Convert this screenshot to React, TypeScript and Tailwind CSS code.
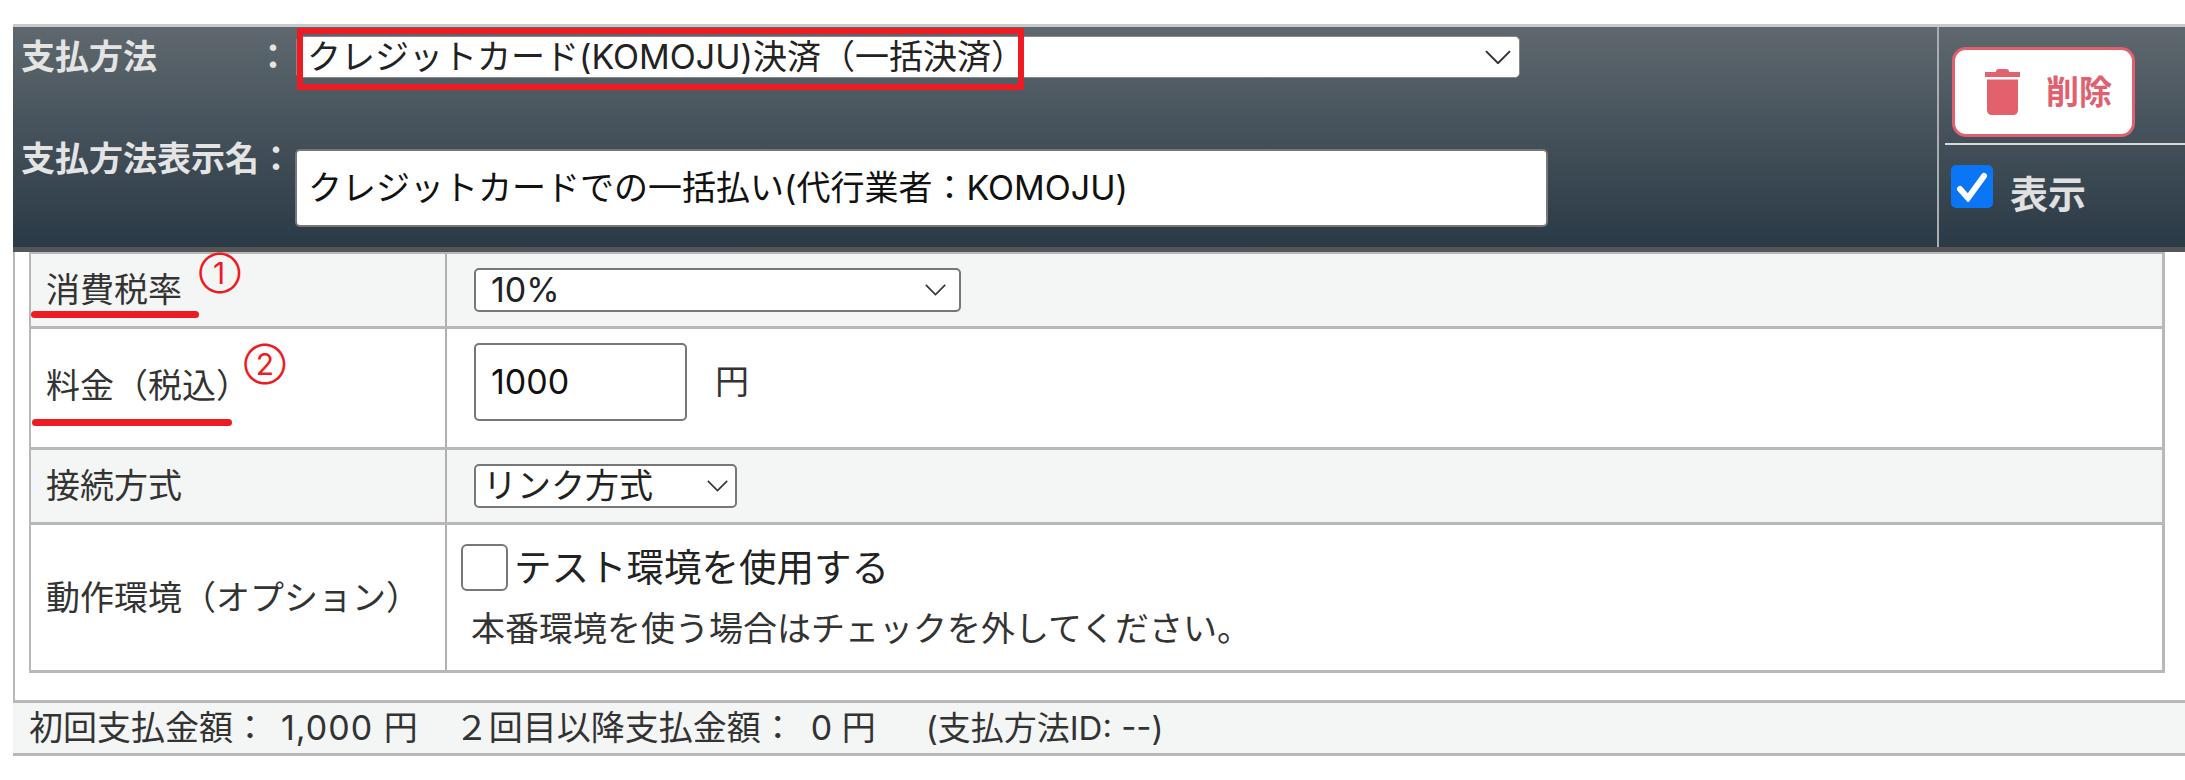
import { useState } from "react";

const jp = "font-['Inter','Noto_Sans_CJK_JP',sans-serif]";

const Chevron = ({ w }: { w: number }) => (
    <svg width={w} height={w * 0.55} viewBox="0 0 26 14" fill="none" stroke="#333" strokeWidth="2" className="shrink-0">
        <path d="M1 1l12 12L25 1" />
    </svg>
);

const Pick = ({ label, w, className }: { label: string; w: number; className: string }) => (
    <div className={`flex items-center justify-between bg-white rounded-[5px] text-[#222] ${className}`}>
        <span className="whitespace-nowrap">{label}</span>
        <Chevron w={w} />
    </div>
);

const Row = ({ shade, height, label, children }: { shade?: boolean; height: string; label: React.ReactNode; children: React.ReactNode }) => (
    <div className={`flex border-b-[3px] border-[#b8b8b8] ${shade ? "bg-[#f4f6f5]" : "bg-white"} ${height}`}>
        <div className="w-[416px] shrink-0 flex items-center pl-[15px] border-r-2 border-[#b0b0b0] text-[#333]">{label}</div>
        <div className="flex-1 flex items-center pl-[27px]">{children}</div>
    </div>
);

const App = () => {
    const [visible, setVisible] = useState(true);
    const [test, setTest] = useState(false);

    return (
        <div className={`${jp} w-[2185px] h-[780px] overflow-hidden bg-white pt-[24px] pl-[13px] text-[34px] leading-none`}>
            <header className="flex h-[228px] border-t-[3px] border-[#c9c9c9] border-b-[5px] border-b-[#555] bg-gradient-to-b from-[#5f686e] to-[#2a3a46]">
                <div className="w-[1926px] shrink-0 border-r-2 border-[#a9adb0] pl-[8px] pt-[9px]">
                    <div className="flex items-start">
                        <div className="w-[275px] flex justify-between pt-[4px] pr-[6px] font-bold text-[#e4e4e4]">
                            <span>支払方法</span>
                            <span>：</span>
                        </div>
                        <div className="relative">
                            <Pick label="クレジットカード(KOMOJU)決済（一括決済）" w={26} className="w-[1224px] h-[42px] pl-[10px] pr-[8px] border border-[#888]" />
                            <div className="absolute left-[1px] top-[-8px] w-[727px] h-[62px] border-[6px] border-[#ed1c24]" />
                        </div>
                    </div>
                    <div className="flex items-start mt-[71px]">
                        <div className="w-[274px] mt-[-7px] font-bold text-[#e4e4e4] whitespace-nowrap">支払方法表示名：</div>
                        <div className="w-[1253px] h-[78px] flex items-center pl-[11px] bg-white rounded-[5px] border-2 border-[#777] text-[#111] whitespace-nowrap">
                            クレジットカードでの一括払い(代行業者：KOMOJU)
                        </div>
                    </div>
                </div>
                <div className="flex-1 pt-[20px]">
                    <button className="ml-[13px] w-[183px] h-[90px] flex items-center justify-center gap-[26px] pl-[10px] bg-white rounded-[14px] border-[3px] border-[#e0606e] text-[#e0606e] text-[33px] font-bold">
                        <svg width="35" height="46" viewBox="0 0 35 46" fill="#e3616d">
                            <path d="M11 2.5C11 1 12 0 14 0h7c2 0 3 1 3 2.5V3h11v5H0V3h11z" />
                            <path d="M2 10.5h31V41c0 3-2 5-5 5H7c-3 0-5-2-5-5z" />
                        </svg>
                        削除
                    </button>
                    <div className="ml-[6px] mt-[6px] h-[2px] bg-[#d8d8d8]" />
                    <label className="ml-[12px] mt-[20px] flex items-start gap-[17px] font-bold text-[#e0e0e0]">
                        <input type="checkbox" checked={visible} onChange={() => setVisible(!visible)} className="sr-only" />
                        <span className="w-[42px] h-[43px] rounded-[5px] bg-[#0a76f6] flex items-center justify-center">
                            <svg width="32" height="30" viewBox="0 0 32 30" fill="none" stroke="white" strokeWidth="6" strokeLinecap="round">
                                <path d="M4 17l8 9L28 4" />
                            </svg>
                        </span>
                        <span className="mt-[10px] text-[38px]">表示</span>
                    </label>
                </div>
            </header>

            <div className="h-[448px] border-l-2 border-[#b8b8b8] pl-[14px] pr-[20px]">
                <div className="border-t-2 border-l-2 border-r-[3px] border-[#b8b8b8]">
                    <Row shade height="h-[75px]" label={
                        <span className="relative">
                            消費税率
                            <span className="absolute left-[-15px] top-[38px] w-[168px] h-[7px] rounded-full bg-[#ed1c24]" />
                            <span className="absolute left-[153px] top-[-15px] text-[30px] text-[#ed1c24]">①</span>
                        </span>
                    }>
                        <Pick label="10%" w={21} className="w-[487px] h-[44px] pl-[15px] pr-[13px] border-2 border-[#777]" />
                    </Row>
                    <Row height="h-[121px]" label={
                        <span className="relative top-[-2px]">
                            料金（税込）
                            <span className="absolute left-[-14px] top-[50px] w-[200px] h-[7px] rounded-full bg-[#ed1c24]" />
                            <span className="absolute left-[198px] top-[-20px] text-[30px] text-[#ed1c24]">②</span>
                        </span>
                    }>
                        <div className="w-[213px] h-[78px] flex items-center pl-[15px] rounded-[5px] border-2 border-[#777] text-[#111] mt-[-12px]">1000</div>
                        <span className="ml-[28px] text-[#333] mt-[-12px]">円</span>
                    </Row>
                    <Row shade height="h-[75px]" label="接続方式">
                        <Pick label="リンク方式" w={21} className="w-[263px] h-[44px] pl-[7px] pr-[7px] border-2 border-[#777]" />
                    </Row>
                    <Row height="h-[148px]" label="動作環境（オプション）">
                        <div className="self-start ml-[-13px]">
                            <label className="flex items-center mt-[19px]">
                                <input type="checkbox" checked={test} onChange={() => setTest(!test)} className="sr-only" />
                                <span className="w-[47px] h-[47px] rounded-[6px] border-2 border-[#777] bg-white" />
                                <span className="ml-[6px] text-[#222] text-[37.5px]">テスト環境を使用する</span>
                            </label>
                            <p className="mt-[21px] ml-[10px] text-[#333] text-[34px]">本番環境を使う場合はチェックを外してください。</p>
                        </div>
                    </Row>
                </div>
            </div>

            <footer className="h-[56px] flex items-center pl-[16px] border-t-[3px] border-b-[3px] border-[#b8b8b8] bg-[#f4f6f5] text-[#333] whitespace-nowrap">
                <span>初回支払金額：</span>
                <span className="ml-[14px] tracking-[1px]">1,000 円</span>
                <span className="ml-[36px]">２回目以降支払金額：</span>
                <span className="ml-[16px]">0 円</span>
                <span className="ml-[50px] text-[33px]">(支払方法ID: --)</span>
            </footer>
        </div>
    );
};

export default App;
